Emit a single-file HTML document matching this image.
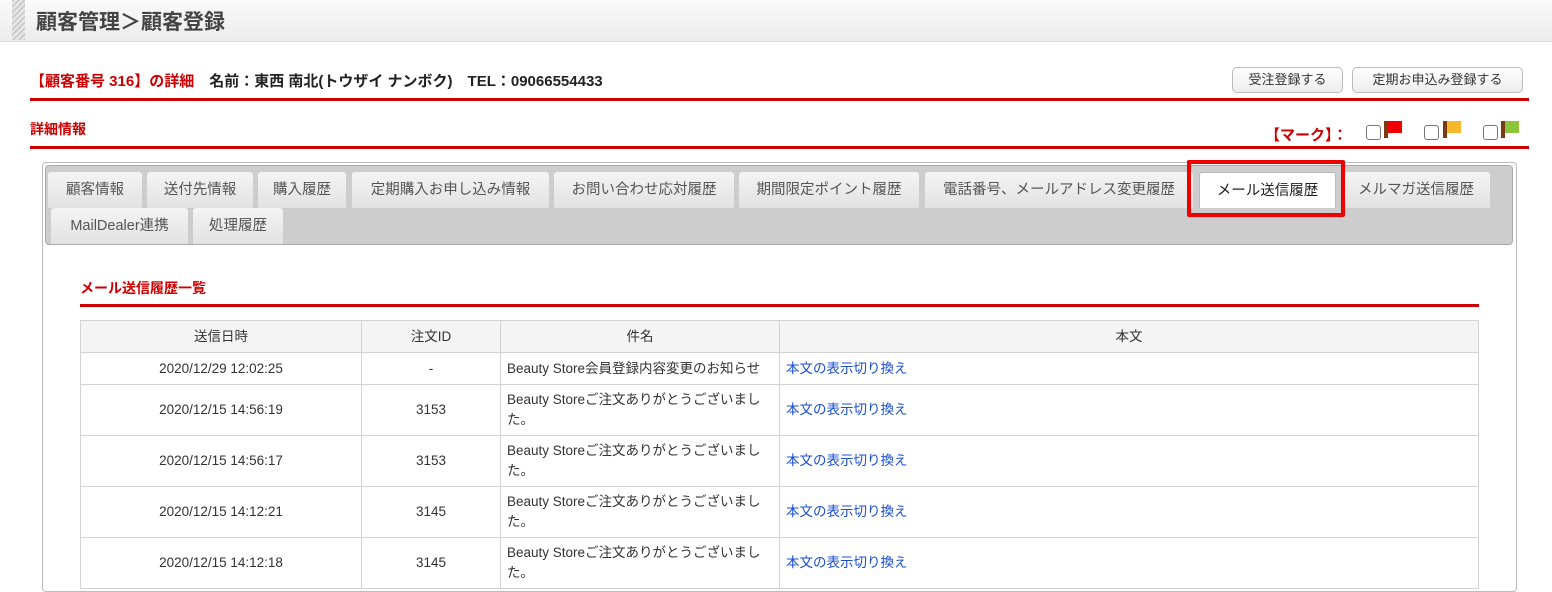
<!DOCTYPE html>
<html><head><meta charset="utf-8"><style>
*{box-sizing:border-box;margin:0;padding:0}
body{width:1552px;height:585px;overflow:hidden;background:#fff;font-family:"Liberation Sans","Noto Sans CJK JP",sans-serif;color:#333;position:relative}
.a{position:absolute}
.hdr{left:0;top:0;width:1552px;height:42px;background:linear-gradient(#fafafa,#ececec);border-bottom:1px solid #d8d8d8}
.stripe{left:12px;top:0;width:13px;height:40px;background:repeating-linear-gradient(135deg,#ccc 0 2px,#e8e8e8 2px 4px)}
.red{background:#c00}
.btn{top:67px;height:26px;border:1px solid #bbb;border-radius:5px;background:linear-gradient(#fff,#ececec);font-size:13px;color:#333;text-align:center;line-height:24px}
.tab{height:36px;background:linear-gradient(#f4f4f4,#e2e2e2);border-radius:3px 3px 0 0;font-size:14.5px;color:#555;text-align:center;line-height:36px;white-space:nowrap}
table{position:absolute;left:80px;top:320px;width:1399px;border-collapse:collapse;table-layout:fixed;font-size:13.5px;color:#333}
td,th{border:1px solid #d3d3d3;font-weight:normal;vertical-align:middle;line-height:20px}
th{background:#f3f4f3;height:32px;text-align:center}
td.c{text-align:center}
td.l{padding-left:6px;padding-right:8px}
a{color:#1a4fd6;text-decoration:none}
.cb{width:15px;height:15px;border:1px solid #777;border-radius:3px;background:#fff;top:125px}
.flag{top:121px;width:18px;height:17px}
</style></head><body>
<div class="a hdr"></div><div class="a stripe"></div>
<div class="a" style="left:36px;top:6px;font-size:21px;font-weight:bold;color:#444">顧客管理＞顧客登録</div>
<div class="a" style="left:30px;top:70px;font-size:15px;font-weight:bold;white-space:nowrap"><span style="color:#c00">【顧客番号 316】の詳細</span>　<span style="color:#222">名前：東西 南北(トウザイ ナンボク)　TEL：09066554433</span></div>
<div class="a btn" style="left:1232px;width:111px">受注登録する</div>
<div class="a btn" style="left:1352px;width:171px">定期お申込み登録する</div>
<div class="a red" style="left:30px;top:98px;width:1499px;height:3px"></div>
<div class="a" style="left:30px;top:119px;font-size:14px;font-weight:bold;color:#c00">詳細情報</div>
<div class="a" style="left:1265px;top:124px;font-size:15px;font-weight:bold;color:#c00">【マーク】：</div>
<div class="a cb" style="left:1366px"></div>
<div class="a flag" style="left:1384px"><div style="position:absolute;left:0;top:0;width:4px;height:17px;background:#7a3a12"></div><div style="position:absolute;left:4px;top:0;width:14px;height:12px;background:#e00"></div></div>
<div class="a cb" style="left:1424px"></div>
<div class="a flag" style="left:1443px"><div style="position:absolute;left:0;top:0;width:4px;height:17px;background:#7a3a12"></div><div style="position:absolute;left:4px;top:0;width:14px;height:12px;background:#f5b82a"></div></div>
<div class="a cb" style="left:1483px"></div>
<div class="a flag" style="left:1501px"><div style="position:absolute;left:0;top:0;width:4px;height:17px;background:#7a3a12"></div><div style="position:absolute;left:4px;top:0;width:14px;height:12px;background:#8cc43a"></div></div>
<div class="a red" style="left:30px;top:146px;width:1499px;height:3px"></div>
<div class="a" style="left:42px;top:162px;width:1475px;height:430px;border:1px solid #bbb;border-radius:4px"></div>
<div class="a" style="left:45px;top:165px;width:1468px;height:80px;background:#cdcdcd;border:1px solid #aaa;border-radius:4px"></div>
<div class="a tab" style="left:48px;top:172px;width:94px">顧客情報</div>
<div class="a tab" style="left:147px;top:172px;width:106px">送付先情報</div>
<div class="a tab" style="left:258px;top:172px;width:88px">購入履歴</div>
<div class="a tab" style="left:352px;top:172px;width:197px">定期購入お申し込み情報</div>
<div class="a tab" style="left:554px;top:172px;width:180px">お問い合わせ応対履歴</div>
<div class="a tab" style="left:739px;top:172px;width:180px">期間限定ポイント履歴</div>
<div class="a tab" style="left:925px;top:172px;width:268px">電話番号、メールアドレス変更履歴</div>
<div class="a tab" style="left:1199px;top:172px;width:137px;background:#fff;color:#222;border:1px solid #bbb;border-bottom:none">メール送信履歴</div>
<div class="a tab" style="left:1342px;top:172px;width:148px">メルマガ送信履歴</div>
<div class="a" style="left:1187px;top:160px;width:158px;height:57px;border:4px solid #e00;border-radius:2px"></div>
<div class="a tab" style="left:51px;top:208px;width:137px">MailDealer連携</div>
<div class="a tab" style="left:193px;top:208px;width:90px">処理履歴</div>
<div class="a" style="left:80px;top:278px;font-size:14px;font-weight:bold;color:#c00">メール送信履歴一覧</div>
<div class="a red" style="left:80px;top:304px;width:1399px;height:3px"></div>
<table>
<colgroup><col style="width:281px"><col style="width:139px"><col style="width:279px"><col></colgroup>
<tr><th>送信日時</th><th>注文ID</th><th>件名</th><th>本文</th></tr>
<tr style="height:32px"><td class="c">2020/12/29 12:02:25</td><td class="c">-</td><td class="l" style="white-space:nowrap;padding-right:0">Beauty Store会員登録内容変更のお知らせ</td><td class="l"><a>本文の表示切り換え</a></td></tr>
<tr style="height:51px"><td class="c">2020/12/15 14:56:19</td><td class="c">3153</td><td class="l">Beauty Storeご注文ありがとうございまし<br>た。</td><td class="l"><a>本文の表示切り換え</a></td></tr>
<tr style="height:51px"><td class="c">2020/12/15 14:56:17</td><td class="c">3153</td><td class="l">Beauty Storeご注文ありがとうございまし<br>た。</td><td class="l"><a>本文の表示切り換え</a></td></tr>
<tr style="height:51px"><td class="c">2020/12/15 14:12:21</td><td class="c">3145</td><td class="l">Beauty Storeご注文ありがとうございまし<br>た。</td><td class="l"><a>本文の表示切り換え</a></td></tr>
<tr style="height:51px"><td class="c">2020/12/15 14:12:18</td><td class="c">3145</td><td class="l">Beauty Storeご注文ありがとうございまし<br>た。</td><td class="l"><a>本文の表示切り換え</a></td></tr>
</table>
</body></html>
